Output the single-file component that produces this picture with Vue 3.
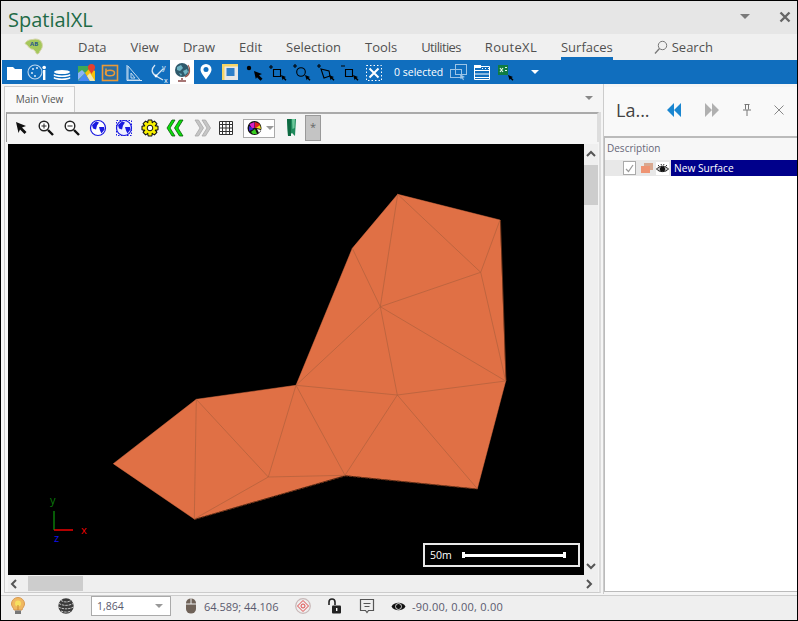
<template>
  <div class="window">
    <header class="title">
      <span class="app-name">SpatialXL</span>
      <svg class="win-caret" width="12" height="8" viewBox="0 0 12 8"><path d="M1 1h10L6 6z" fill="#7a7a7a" /></svg>
      <svg class="win-close" width="12" height="12" viewBox="0 0 12 12"><path d="M1.5 1.5l9 9M10.5 1.5l-9 9" stroke="#666" stroke-width="2.4" /></svg>
    </header>

    <nav class="menu">
      <svg class="logo" width="24" height="24" viewBox="0 0 24 24">
        <path d="M4 7c3-3 6-2 9-3 3 0 6 1 7 4 1 3 0 6-2 8-1 3-3 4-4 2-1-3-3-4-5-4-2-1-3-3-4-4S2 9 4 7z" fill="#a5c85a" stroke="#d4d4a8" />
        <text x="8" y="11" class="logo-text">AB</text>
      </svg>
      <span v-for="item in menuItems" :key="item" class="menu-item" :class="['m-' + item.toLowerCase(), { active: item === 'Surfaces' }]">{{ item }}</span>
      <span class="search">
        <svg width="14" height="15" viewBox="0 0 14 15"><circle cx="8.5" cy="5.5" r="4.2" fill="none" stroke="#777" /><path d="M5.5 8.5L1 13.5" stroke="#777" stroke-width="1.3" /></svg>
        Search
      </span>
    </nav>

    <div class="ribbon">
      <svg class="cell" viewBox="0 0 24 24"><path d="M5 7h6l2 2h7v11H5z" fill="#fff" /></svg>
      <svg class="cell" viewBox="0 0 24 24">
        <circle cx="9" cy="12" r="7" fill="none" stroke="#bcd6ee" stroke-width="1.1" />
        <circle cx="7" cy="9" r="1" fill="#dcebf8" /><circle cx="11" cy="8" r="1" fill="#dcebf8" /><circle cx="6" cy="13" r="1" fill="#dcebf8" /><circle cx="9" cy="16" r="1" fill="#dcebf8" />
        <rect x="17" y="10" width="2.4" height="10" fill="#fff" /><circle cx="18.2" cy="7.5" r="1.8" fill="#fff" />
      </svg>
      <svg class="cell" viewBox="0 0 24 24">
        <ellipse cx="12" cy="12" rx="8" ry="2" fill="#fff" />
        <path d="M4 14.5c2 2.3 14 2.300 16 0M4 17.500c2 2.300 14 2.300 16 0" fill="none" stroke="#fff" stroke-width="1.700" />
      </svg>
      <svg class="cell" viewBox="0 0 24 24">
        <path d="M4 6h12v15H4z" fill="#3fa857" />
        <path d="M4 21l7-8 5 8z" fill="#4a8af4" />
        <path d="M4 13l4-3 3 3-7 7z" fill="#8ab4f8" />
        <path d="M11 13l5-5 5 3v10h-5z" fill="#f4c20d" />
        <path d="M16 21l-3-5 3-3 5 8z" fill="#f0e6b0" />
        <path d="M17.500 4a3.600 3.600 0 0 1 3.600 3.600C21.100 10 18.500 11.500 17.500 14c-1-2.500-3.600-4-3.600-6.400A3.600 3.600 0 0 1 17.500 4z" fill="#e3402f" />
      </svg>
      <svg class="cell" viewBox="0 0 24 24">
        <rect x="4.500" y="5.500" width="15" height="15" fill="#2e6d9e" stroke="#ea9a38" stroke-width="1.600" />
        <path d="M8 8.500v6.500" stroke="#ea9a38" stroke-width="1.500" /><ellipse cx="12" cy="13" rx="4.500" ry="2.800" fill="none" stroke="#ea9a38" stroke-width="1.500" />
      </svg>
      <svg class="cell" viewBox="0 0 24 24">
        <path d="M5 5v15.500h15" fill="none" stroke="#d5e5f4" /><path d="M6 6l12 14H6z" fill="none" stroke="#bfd8ee" /><path d="M9 13l4 5H9z" fill="none" stroke="#bfd8ee" />
      </svg>
      <svg class="cell" viewBox="0 0 24 24">
        <path d="M10 16L17 9M10 16l7 4M10 16C5 13 5 9 9 5" fill="none" stroke="#d5e5f4" stroke-width="1.300" />
        <circle cx="10" cy="16" r="1.400" fill="#fff" />
        <text x="16" y="10" class="tiny">y</text><text x="18" y="23" class="tiny">x</text>
      </svg>
      <svg class="cell globe-cell" viewBox="0 0 24 24">
        <circle cx="12" cy="10" r="7" fill="#2f5a6c" /><path d="M7 7l4-2 2 3-3 3-3-1zM13 11l4-2 1 3-3 3zM9 13l3 1-1 2z" fill="#6fb4c4" />
        <path d="M18 5c3 4 2 10-3 12" fill="none" stroke="#9a5a50" stroke-width="1.200" /><path d="M12 18v2M8 21h8" stroke="#8a4a48" stroke-width="1.500" />
      </svg>
      <svg class="cell" viewBox="0 0 24 24">
        <path d="M12 4a5.500 5.500 0 0 1 5.500 5.500C17.500 13 14 16 12 19.500 10 16 6.500 13 6.500 9.500A5.500 5.500 0 0 1 12 4z" fill="#fff" /><circle cx="12" cy="9.500" r="2.500" fill="#106ebe" />
      </svg>
      <svg class="cell" viewBox="0 0 24 24">
        <path d="M4 4h16v16H4z" fill="#e6e6e6" /><path d="M4 4h16v2.500H6.500V20H4z" fill="#f5d667" /><rect x="8.500" y="8" width="8" height="8" fill="#2d7fc9" />
      </svg>
      <svg class="cell" viewBox="0 0 24 24">
        <circle cx="7" cy="8" r="2.200" fill="#000" /><path d="M12 11l8 3-3 1.200 3.500 3.500-2 2-3.500-3.500L13.800 19z" fill="#000" />
      </svg>
      <svg class="cell" viewBox="0 0 24 24">
        <path d="M5 5v4M3 7h4M7.500 9.500h7v7h-7z" fill="none" stroke="#000" stroke-width="1.100" /><path d="M15 15l5 2-1.500.8 2 2-1 1-2-2-.8 1.500z" fill="#000" />
      </svg>
      <svg class="cell" viewBox="0 0 24 24">
        <path d="M5 4v4M3 6h4" fill="none" stroke="#000" stroke-width="1.100" /><circle cx="11" cy="12" r="4.300" fill="none" stroke="#000" stroke-width="1.100" /><path d="M15 15l5 2-1.500.8 2 2-1 1-2-2-.8 1.500z" fill="#000" />
      </svg>
      <svg class="cell" viewBox="0 0 24 24">
        <path d="M5 4v4M3 6h4M7 9l8 2 1 5-6 2z" fill="none" stroke="#000" stroke-width="1.100" /><path d="M15 15l5 2-1.500.8 2 2-1 1-2-2-.8 1.500z" fill="#000" />
      </svg>
      <svg class="cell" viewBox="0 0 24 24">
        <path d="M3 6h4M7.500 9.500h7v7h-7z" fill="none" stroke="#000" stroke-width="1.100" /><path d="M15 15l5 2-1.500.8 2 2-1 1-2-2-.8 1.500z" fill="#000" />
      </svg>
      <svg class="cell" viewBox="0 0 24 24">
        <rect x="4.500" y="5.500" width="15" height="15" fill="none" stroke="#fff" stroke-dasharray="1.500 2" />
        <path d="M7.500 8.500l9 9M16.500 8.500l-9 9" stroke="#fff" stroke-width="2" />
      </svg>
      <span class="selected-count">0 selected</span>
      <svg class="cell" viewBox="0 0 24 24">
        <rect x="9.500" y="4.500" width="11" height="10" fill="none" stroke="#9cc4e6" /><rect x="4.500" y="9.500" width="11" height="8" fill="none" stroke="#9cc4e6" /><path d="M14 14l5 3-2 .7 1 2-1 .5-1-2-1.500 1z" fill="#9cc4e6" />
      </svg>
      <svg class="cell" viewBox="0 0 24 24">
        <path d="M4.500 6.500h15v13h-15z" fill="none" stroke="#fff" /><path d="M4 5h7v3H4z" fill="#fff" /><path d="M4 10.500h16M4 14h16M4 17.500h16" stroke="#fff" /><path d="M12 8.500h8" stroke="#fff" stroke-dasharray="1 2" />
      </svg>
      <svg class="cell" viewBox="0 0 24 24">
        <rect x="4" y="5" width="10" height="10" fill="#107c41" /><path d="M6 8l3 4M9 8l-3 4" stroke="#dff5e6" stroke-width="1.200" /><path d="M11 7.500h2M11 10.500h2" stroke="#dff5e6" />
        <path d="M14 15l5 2-1.500.8 2 2-1 1-2-2-.8 1.500z" fill="#000" />
      </svg>
      <svg class="ribbon-caret" width="8" height="4" viewBox="0 0 8 4"><path d="M0 0h8L4 4z" fill="#fff" /></svg>
    </div>

    <main class="main">
      <section class="doc">
        <div class="tabs">
          <span class="tab">Main View</span>
          <svg class="tabs-caret" width="8" height="4" viewBox="0 0 8 4"><path d="M0 0h8L4 4z" fill="#888" /></svg>
        </div>

        <div class="doc-body">
          <div class="map-tools">
            <svg class="tool" viewBox="0 0 26 26"><path d="M9 7l10 4-4 1.500 4.500 4.500-2 2-4.500-4.500L11.500 18z" fill="#111" /></svg>
            <svg class="tool" viewBox="0 0 26 26"><circle cx="11" cy="11" r="4.800" fill="#fff" stroke="#222" stroke-width="1.400" /><path d="M8.500 11h5M11 8.500v5" stroke="#222" /><path d="M15 15l5 5" stroke="#111" stroke-width="2.400" /></svg>
            <svg class="tool" viewBox="0 0 26 26"><circle cx="11" cy="11" r="4.800" fill="#fff" stroke="#222" stroke-width="1.400" /><path d="M8.500 11h5" stroke="#222" /><path d="M15 15l5 5" stroke="#111" stroke-width="2.400" /></svg>
            <svg class="tool" viewBox="0 0 26 26">
              <circle cx="13" cy="13" r="7.500" fill="#fff" stroke="#1a1ae0" stroke-width="1.200" />
              <path d="M7 10l4-3.500 3 1-2 3-1 4-3-1zM14 12h5l.5 2.500-3 4-1.500-3z" fill="#1a1ae0" />
            </svg>
            <svg class="tool" viewBox="0 0 26 26">
              <rect x="5.500" y="5.500" width="15" height="15" fill="none" stroke="#1a1ae0" stroke-dasharray="1.500 1.500" />
              <circle cx="13" cy="13" r="7.500" fill="#eef0ff" stroke="#1a1ae0" stroke-width="1.200" />
              <path d="M7 10l4-3.500 3 1-2 3-1 4-3-1zM14 12h5l.5 2.500-3 4-1.500-3z" fill="#1a1ae0" />
            </svg>
            <svg class="tool" viewBox="0 0 26 26">
              <path :d="gearPath" fill="#f8f000" stroke="#111" stroke-width="1.100" stroke-linejoin="round" />
              <circle cx="13" cy="13" r="2.800" fill="#fff" stroke="#111" />
            </svg>
            <svg class="tool" viewBox="0 0 26 26"><path d="M12 5l-5 8 5 8h-3l-5-8 5-8zM20 5l-5 8 5 8h-3.500l-5-8 5-8z" fill="#0be00b" stroke="#0a5a0a" stroke-width=".8" /></svg>
            <svg class="tool" viewBox="0 0 26 26"><path d="M6 5l5 8-5 8h3.500l5-8-5-8zM13 5l5 8-5 8h3.500l5-8-5-8z" fill="#c6c6c6" stroke="#a8a8a8" stroke-width=".8" /></svg>
            <svg class="tool grid-tool" viewBox="0 0 26 26">
              <path d="M6.500 6.500h13v13h-13zM6.500 9.500h13M6.500 13h13M6.500 16.500h13M9.500 6.500v13M13 6.500v13M16.500 6.500v13" fill="#fff" stroke="#333" />
            </svg>
            <div class="combo-small">
              <svg width="18" height="16" viewBox="0 0 18 16">
                <circle cx="8.500" cy="8" r="7" fill="#111" />
                <path d="M8.500 2l-5 2 2 4h3z" fill="#d81ec8" /><path d="M9 2l5 2-2 4H9z" fill="#e02020" /><path d="M14 5l1 4-5-1z" fill="#f0e020" /><path d="M3 6v5l5-2z" fill="#3a2ad0" /><path d="M5 12l4-3 2 5H7z" fill="#38d020" /><path d="M11 9l4 1-2 3z" fill="#f5f5f5" />
              </svg>
              <svg width="8" height="4" viewBox="0 0 8 4"><path d="M0 0h8L4 4z" fill="#999" /></svg>
            </div>
            <svg class="tool bookmark" viewBox="0 0 26 26"><path d="M9 4h9l-1 17-3-3-4 3z" fill="#1f8a5c" /><path d="M9 4h4v17l-3 0z" fill="#0e6a42" /><path d="M14 4h3l-.5 9-2 1z" fill="#6cc79a" /></svg>
            <span class="star-btn">*</span>
          </div>

          <div class="view">
            <div class="canvas">
              <svg class="surface" width="576" height="431" viewBox="8 144 576 431">
                <polygon :points="outline" fill="#e07045" stroke="#e07045" stroke-width=".5" />
                <path d="M194.300 519.500L345 476M345 475.800L477.300 489" stroke="#6e3419" stroke-width="1" fill="none" stroke-dasharray="3 1" />
                <path d="M500.500 220L506 381" stroke="#6e3419" stroke-width=".7" fill="none" />
                <path :d="edges" stroke="#b0603c" stroke-width=".7" fill="none" />
                <path d="M54 511v19" stroke="#0a7a0a" stroke-width="1.500" /><path d="M54 530h19" stroke="#e00" stroke-width="1.500" />
                <text x="50" y="504" class="axis" fill="#0a7a0a">y</text>
                <text x="81" y="534" class="axis" fill="#e00">x</text>
                <text x="54" y="542" class="axis" fill="#11e">z</text>
              </svg>
              <div class="scale">
                <span>50m</span>
                <i class="scale-bar"></i>
              </div>
            </div>

            <div class="vscroll">
              <svg width="10" height="7" viewBox="0 0 10 7"><path d="M1 6l4-4 4 4" fill="none" stroke="#555" stroke-width="2" /></svg>
              <i class="vthumb"></i>
              <svg class="down" width="10" height="7" viewBox="0 0 10 7"><path d="M1 1l4 4 4-4" fill="none" stroke="#555" stroke-width="2" /></svg>
            </div>
            <div class="hscroll">
              <svg width="7" height="10" viewBox="0 0 7 10"><path d="M6 1L2 5l4 4" fill="none" stroke="#555" stroke-width="2" /></svg>
              <i class="hthumb"></i>
              <svg class="right" width="7" height="10" viewBox="0 0 7 10"><path d="M1 1l4 4-4 4" fill="none" stroke="#555" stroke-width="2" /></svg>
            </div>
          </div>
        </div>
      </section>

      <aside class="layers">
        <div class="layers-head">
          <span class="layers-title">La...</span>
          <svg width="16" height="14" viewBox="0 0 16 14"><path d="M8 0L1 7l7 7zM15 0L8 7l7 7z" fill="#1a86d0" /></svg>
          <svg class="next" width="16" height="14" viewBox="0 0 16 14"><path d="M1 0l7 7-7 7zM8 0l7 7-7 7z" fill="#b0b0b0" /></svg>
          <svg class="pin" width="10" height="12" viewBox="0 0 10 12"><path d="M2.500.5h5M3.500.5v5M6.500.5v5M1 6h8M5 6v6" stroke="#777" fill="none" /></svg>
          <svg class="close" width="10" height="10" viewBox="0 0 10 10"><path d="M.5.5l9 9M9.500.5l-9 9" stroke="#888" /></svg>
        </div>
        <div class="layers-box">
          <div class="col-head">Description</div>
          <div class="layer-row">
            <span class="row-gutter">
              <span class="check"><svg width="9" height="9" viewBox="0 0 9 9"><path d="M1 5l2.500 2.500L8 1" fill="none" stroke="#999" stroke-width="1.200" /></svg></span>
              <svg class="swatch" width="12" height="10" viewBox="0 0 12 10"><path d="M0 3h9v7H0z" fill="#ee9473" /><path d="M3 0h9v7H9V3H3z" fill="#d8a890" /></svg>
              <svg class="eye" width="13" height="13" viewBox="0 0 13 13"><rect width="13" height="13" fill="#fff" /><path d="M.5 7C3 3.500 10 3.500 12.500 7 10 10.500 3 10.500.5 7z" fill="#bbb" stroke="#222" /><circle cx="6.500" cy="7" r="2.600" fill="#111" /><path d="M2 3l1.500 1.500M5 2l.7 1.500M8 2l-.7 1.500M11 3L9.500 4.500" stroke="#333" /></svg>
            </span>
            <span class="row-label">New Surface</span>
          </div>
        </div>
      </aside>
    </main>

    <footer class="status">
      <svg class="st bulb" width="16" height="18" viewBox="0 0 16 18">
        <path d="M8 .5a6.500 6.500 0 0 1 6.500 6.500c0 2.500-2 3.500-2.500 6H4C3.500 10.500 1.500 9.500 1.500 7A6.500 6.500 0 0 1 8 .5z" fill="#f0b860" stroke="#d89850" />
        <circle cx="8" cy="6.500" r="3" fill="#f7e060" /><path d="M8 8v5" stroke="#c98a30" fill="none" /><path d="M5 13.500h6v3.500H5z" fill="#777" />
      </svg>
      <svg class="st cone" width="16" height="16" viewBox="0 0 16 16">
        <ellipse cx="8" cy="8" rx="7.700" ry="7.700" fill="#3a3a3a" />
        <path d="M1 5.500C5 8 11 8 15 5.500M.5 9C5 11.500 11 11.500 15.500 9M3 2.500C6 4.500 10 4.500 13 2.500M3 13c3 1.500 7 1.500 10 0" stroke="#c4c4c4" stroke-width="1" stroke-dasharray="2.500 .8" fill="none" />
      </svg>
      <div class="scale-combo">
        <span>1,864</span>
        <svg width="8" height="4" viewBox="0 0 8 4"><path d="M0 0h8L4 4z" fill="#999" /></svg>
      </div>
      <svg class="st mouse" width="12" height="16" viewBox="0 0 12 16"><path d="M1 5a5 4.500 0 0 1 10 0v6a5 4.500 0 0 1-10 0z" fill="#6f6258" /><path d="M1 6h10M6 .5V6" stroke="#efefef" /></svg>
      <span class="coords">64.589; 44.106</span>
      <svg class="st target" width="16" height="16" viewBox="0 0 16 16"><circle cx="8" cy="8" r="7.300" fill="none" stroke="#c8b8b8" stroke-width="1.200" /><path d="M8 2.500L13.500 8 8 13.500 2.500 8z" fill="none" stroke="#e04848" /><circle cx="8" cy="8" r="2" fill="none" stroke="#e04848" /></svg>
      <svg class="st lock" width="16" height="16" viewBox="0 0 16 16"><path d="M2 7V4a3 3 0 0 1 6 0v3" fill="none" stroke="#222" stroke-width="1.600" /><rect x="5" y="7.500" width="9" height="8" rx="1" fill="#222" /><rect x="9" y="10" width="1.400" height="3" fill="#fff" /></svg>
      <svg class="st note" width="16" height="16" viewBox="0 0 16 16"><path d="M1.500 1.500h13v11H9.500L8 14.500 6.500 12.500h-5z" fill="none" stroke="#555" stroke-width="1.200" /><path d="M4.500 5.500h7M5.500 8.500h5" stroke="#555" /></svg>
      <svg class="st view-eye" width="15" height="11" viewBox="0 0 15 11"><path d="M.5 5.500C3 .5 12 .5 14.500 5.500 12 10.500 3 10.500.5 5.500z" fill="#111" /><circle cx="7.500" cy="5.500" r="3" fill="#111" stroke="#fff" stroke-width=".8" /></svg>
      <span class="rotation">-90.00, 0.00, 0.00</span>
    </footer>
  </div>
</template>

<script setup>
const menuItems = ['Data', 'View', 'Draw', 'Edit', 'Selection', 'Tools', 'Utilities', 'RouteXL', 'Surfaces']

// surface vertices, in page pixels
const pts = {
  A: [397.7, 194.3], B: [500, 220], C: [480.7, 272.3], D: [352.3, 248.3], E: [380.3, 306.7],
  F: [505.7, 381], G: [397.3, 395], H: [296, 385.3], I: [196.3, 399.3], J: [113.3, 463.7],
  K: [194.3, 519], L: [268.3, 477], M: [345, 475.3], N: [477.3, 488.7]
}

const outline = ['A', 'B', 'F', 'N', 'M', 'K', 'J', 'I', 'H', 'D'].map(k => pts[k].join(',')).join(' ')

const edges = ['AE', 'AC', 'BC', 'CE', 'CF', 'DE', 'EH', 'EG', 'EF', 'HG', 'GF', 'GM', 'GN', 'HL', 'HM', 'IL', 'IK', 'LK', 'LM']
  .map(e => `M${pts[e[0]].join(' ')}L${pts[e[1]].join(' ')}`)
  .join('')

// 8-toothed gear around the middle of a 26px cell
const gearPath = (() => {
  const out = []
  for (let i = 0; i < 8; i++) {
    const a = (i * Math.PI) / 4
    for (const [off, r] of [[-0.42, 5.8], [-0.22, 8.2], [0.22, 8.2], [0.42, 5.8]]) {
      out.push(`${(13 + r * Math.cos(a + off)).toFixed(1)} ${(13 + r * Math.sin(a + off)).toFixed(1)}`)
    }
  }
  return `M${out.join('L')}Z`
})()
</script>

<style>
html, body { margin: 0; background: #fff; }
</style>

<style scoped>
.window {
  width: 798px;
  height: 621px;
  box-sizing: border-box;
  border: 1px solid #000;
  display: flex;
  flex-direction: column;
  overflow: hidden;
  background: #f5f5f5;
  font-family: "Open Sans", "Noto Sans", sans-serif;
  color: #444;
}
svg { display: block; flex: none; }

.title {
  height: 33px;
  flex: none;
  background: #e6e6e6;
  display: flex;
  align-items: center;
  padding-left: 7px;
}
.app-name {
  font-size: 20px;
  color: #1f6b47;
  margin-top: 4px;
}
.win-caret { margin-left: auto; margin-top: -2px; }
.win-close { margin: -2px 6px 0 28px; }

.menu {
  height: 26px;
  flex: none;
  background: #f0f0f0;
  display: flex;
  align-items: stretch;
  font-size: 13px;
  color: #505050;
}
.logo { margin: 1px 0 0 21px; }
.logo-text { font: bold 6px "Open Sans", sans-serif; fill: #2a5a8a; }
.menu-item {
  margin-right: 24px;
  padding-top: 4px;
  box-sizing: border-box;
  white-space: nowrap;
  border-bottom: 3px solid transparent;
}
.m-data { margin-left: 32px; }
.m-utilities { letter-spacing: -0.65px; }
.m-routexl { letter-spacing: 0.3px; }
.menu-item.active { border-bottom-color: #106ebe; }
.search {
  display: flex;
  gap: 4px;
  margin-left: 17px;
  padding-top: 4px;
  height: 18px;
}
.search svg { margin-top: 2px; }

.ribbon {
  height: 24px;
  flex: none;
  background: #106ebe;
  display: flex;
  align-items: center;
  margin-left: 1px;
}
.cell { width: 24px; height: 24px; }
.globe-cell { background: #fff; }
.selected-count {
  color: #fff;
  font-size: 10.5px;
  width: 52px;
  margin-left: 8px;
  white-space: nowrap;
}
.ribbon-caret { margin-left: 13px; }

.main {
  flex: 1;
  min-height: 0;
  display: flex;
}

.doc {
  width: 597px;
  margin-left: 3px;
  flex: none;
}
.tabs {
  height: 28px;
  box-sizing: border-box;
  padding-top: 2px;
  display: flex;
  align-items: stretch;
  position: relative;
}
.tab {
  width: 71px;
  box-sizing: border-box;
  border: 1px solid #ccc;
  border-bottom: none;
  background: #f9f9f9;
  text-align: center;
  font-size: 10px;
  line-height: 24px;
  color: #555;
}
.tabs-caret { position: absolute; right: 8px; top: 12px; }

.doc-body {
  border-left: 1px solid #ccc;
  border-right: 2px solid #ddd;
  border-bottom: 1px solid #ccc;
  height: 481px;
  box-sizing: border-box;
}
.map-tools {
  height: 30px;
  box-sizing: border-box;
  margin-left: 1px;
  border-top: 2px solid #aaa;
  border-left: 1px solid #999;
  border-right: 2px solid #ddd;
  background: #f5f5f5;
  display: flex;
  align-items: center;
}
.tool { width: 26px; height: 26px; }
.grid-tool { margin-left: -2px; }
.combo-small {
  width: 32px;
  height: 19px;
  margin-left: 4px;
  box-sizing: border-box;
  border: 1px solid #aaa;
  background: #fff;
  display: flex;
  align-items: center;
  gap: 2px;
  padding-left: 2px;
}
.bookmark { margin-left: 3px; }
.star-btn {
  width: 16px;
  height: 26px;
  margin-left: 1px;
  box-sizing: border-box;
  border: 1px solid #999;
  background: #c4c4c4;
  text-align: center;
  font-size: 11px;
  line-height: 22px;
  color: #666;
}

.view {
  padding: 2px 0 0 3px;
  display: grid;
  grid-template-columns: 576px 14px;
  grid-template-rows: 431px 17px;
}
.canvas {
  position: relative;
  background: #000;
  overflow: hidden;
}
.scale {
  position: absolute;
  left: 415px;
  top: 399px;
  width: 157px;
  height: 24px;
  box-sizing: border-box;
  border: 2px solid #e8e8e8;
  color: #fff;
  font-size: 10.5px;
  display: flex;
  align-items: center;
  padding-left: 5px;
}
.scale-bar {
  position: absolute;
  left: 37px;
  top: 7px;
  width: 104px;
  height: 6px;
  box-sizing: border-box;
  background: linear-gradient(#fff, #fff) center / 100% 3px no-repeat;
  border-left: 3px solid #fff;
  border-right: 3px solid #fff;
}
.vscroll {
  background: #efefef;
  display: flex;
  flex-direction: column;
  align-items: center;
  padding-top: 6px;
}
.vthumb {
  width: 14px;
  height: 40px;
  margin-top: 8px;
  background: #cdcdcd;
}
.down { margin-top: auto; margin-bottom: 5px; }
.hscroll {
  grid-column: 1 / 3;
  background: #efefef;
  display: flex;
  align-items: center;
  padding-left: 2px;
}
.hthumb {
  width: 55px;
  height: 15px;
  margin-left: 11px;
  background: #cdcdcd;
}
.right { margin-left: auto; margin-right: 5px; }

.layers {
  width: 194px;
  margin-left: 2px;
  flex: none;
  padding-top: 3px;
  height: 510px;
  box-sizing: border-box;
  border-left: 1px solid #ccc;
  display: flex;
  flex-direction: column;
}
.layers-head {
  height: 49px;
  box-sizing: border-box;
  padding-bottom: 3px;
  flex: none;
  display: flex;
  align-items: center;
  padding-left: 12px;
  background: #f9f9f9;
}
.layers-title { font-size: 18px; color: #444; width: 50px; }
.next { margin-left: 22px; }
.pin { margin-left: 22px; }
.close { margin-left: 22px; }
.layers-box {
  flex: 1;
  margin-bottom: 2px;
  background: #fff;
  border-top: 2px solid #bbb;
  border-left: 1px solid #bbb;
  border-bottom: 1px solid #bbb;
  min-height: 0;
}
.col-head {
  height: 22px;
  line-height: 21px;
  background: #f7f7f7;
  font-size: 10px;
  color: #667;
  padding-left: 2px;
}
.layer-row {
  display: flex;
  height: 16px;
}
.row-gutter {
  width: 66px;
  flex: none;
  background: #e8e8e8;
  display: flex;
  align-items: center;
  padding-left: 18px;
  box-sizing: border-box;
}
.check {
  width: 13px;
  height: 14px;
  box-sizing: border-box;
  border: 1px solid #aaa;
  background: #fff;
  display: flex;
  align-items: center;
  justify-content: center;
}
.swatch { margin-left: 5px; }
.eye { margin-left: 3px; }
.row-label {
  flex: 1;
  background: #00008b;
  color: #fff;
  font-size: 10.2px;
  line-height: 16px;
  padding-left: 3px;
}

.status {
  flex: none;
  height: 25px;
  background: #efefef;
  border-top: 1px solid #ccc;
  display: flex;
  align-items: center;
  padding-bottom: 4px;
  box-sizing: border-box;
  font-size: 11px;
  color: #5a5a6e;
}
.bulb { margin-left: 9px; }
.cone { margin-left: 32px; }
.scale-combo {
  width: 80px;
  height: 20px;
  margin-left: 17px;
  box-sizing: border-box;
  border: 1px solid #aaa;
  background: #fff;
  display: flex;
  align-items: center;
  justify-content: space-between;
  padding: 0 7px 0 5px;
  font-size: 10.5px;
}
.mouse { margin-left: 14px; }
.coords { margin-left: 7px; width: 82px; white-space: nowrap; }
.target { margin-left: 9px; }
.lock { margin-left: 16px; }
.note { margin-left: 16px; }
.view-eye { margin-left: 16px; }
.rotation { margin-left: 6px; white-space: nowrap; letter-spacing: 0.25px; }

.surface { display: block; }
.axis { font: 11px "Open Sans", sans-serif; }
.tiny { font: 7px "Open Sans", sans-serif; fill: #fff; }
</style>
